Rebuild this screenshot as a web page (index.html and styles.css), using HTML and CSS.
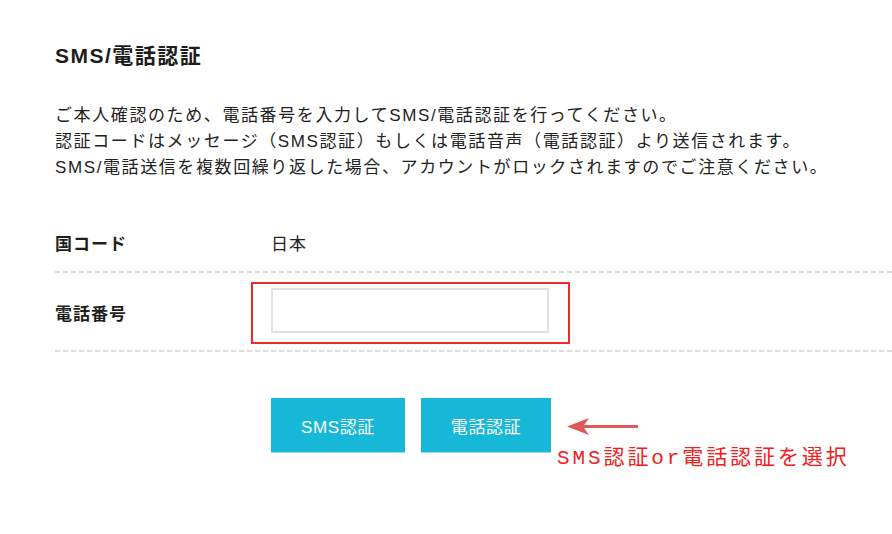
FILE: index.html
```html
<!DOCTYPE html>
<html lang="ja">
<head>
<meta charset="utf-8">
<title>SMS/電話認証</title>
<link rel="stylesheet" href="styles.css">
</head>
<body>
<div class="page">
  <h1 class="title">SMS/電話認証</h1>
  <p class="desc">ご本人確認のため、電話番号を入力してSMS/電話認証を行ってください。<br>認証コードはメッセージ（SMS認証）もしくは電話音声（電話認証）より送信されます。<br>SMS/電話送信を複数回繰り返した場合、アカウントがロックされますのでご注意ください。</p>
  <div class="form">
    <div class="row row-country">
      <div class="label">国コード</div>
      <div class="value">日本</div>
    </div>
    <div class="row row-phone">
      <div class="label">電話番号</div>
      <div class="value">
        <div class="field-wrap">
          <input class="field" type="text" aria-label="電話番号">
          <span class="highlight"></span>
        </div>
      </div>
    </div>
  </div>
  <div class="actions">
    <button class="btn" type="button">SMS認証</button>
    <button class="btn" type="button">電話認証</button>
    <div class="annotation">
      <svg class="arrow" width="74" height="20" viewBox="0 0 74 20" aria-hidden="true">
        <line x1="14" y1="9.5" x2="71" y2="9.5" stroke="#e0595a" stroke-width="3"/>
        <polygon points="0,9.5 22,1 16,9.5 22,18" fill="#e0575a"/>
      </svg>
      <span class="note">SMS認証or電話認証を選択</span>
    </div>
  </div>
</div>
</body>
</html>
```

FILE: styles.css
```css
* { box-sizing: border-box; }

html, body {
  margin: 0;
  background: #ffffff;
}

body {
  color: #222222;
  font-family: "Liberation Sans", "Noto Sans CJK JP", sans-serif;
}

.page {
  padding: 42px 0 90px 55px;
  min-height: 534px;
}

.title {
  margin: 0;
  font-size: 21px;
  line-height: 28px;
  font-weight: 700;
  letter-spacing: 1.5px;
  color: #1c1c1c;
}

.desc {
  margin: 33px 0 0;
  font-size: 17px;
  line-height: 26px;
  letter-spacing: 1.6px;
  color: #222222;
}

.form {
  margin-top: 32px;
}

.row {
  display: flex;
  align-items: center;
  background-image: linear-gradient(to right, #dcdcdc 5px, transparent 5px);
  background-size: 8px 2px;
  background-repeat: repeat-x;
  background-position: left bottom;
}

.row-country {
  height: 60px;
  padding-bottom: 2px;
}

.row-phone {
  padding: 15px 0 19px;
}

.label {
  width: 216px;
  flex: none;
  font-size: 17px;
  font-weight: 700;
  letter-spacing: 1px;
  color: #1e1e1e;
}

.row-phone .label {
  padding-top: 4px;
}

.value {
  font-size: 17px;
  letter-spacing: 1px;
  color: #222222;
}

.field-wrap {
  position: relative;
}

.field {
  display: block;
  width: 278px;
  height: 45px;
  border: 2px solid #e0e0e0;
  background: #ffffff;
  outline: none;
  margin: 0;
}

.highlight {
  position: absolute;
  left: -20px;
  top: -6px;
  width: 319px;
  height: 62px;
  border: 2px solid #ee2a2a;
  pointer-events: none;
}

.actions {
  position: relative;
  display: flex;
  gap: 16px;
  margin: 46px 0 0 216px;
}

.btn {
  height: 55px;
  padding: 0 30px;
  border: none;
  background: #17b8d7;
  box-shadow: inset 0 -1px 0 #8fd9ea;
  color: #ffffff;
  font-family: "Liberation Sans", "Noto Sans CJK JP", sans-serif;
  font-size: 17px;
  font-weight: 400;
  letter-spacing: 0.6px;
}

.annotation {
  position: absolute;
  left: 286px;
  top: 19px;
  width: 330px;
  height: 60px;
}

.arrow {
  display: block;
  margin-left: 10px;
}

.note {
  display: block;
  margin-top: 10px;
  white-space: nowrap;
  font-family: "Liberation Mono", "Noto Sans CJK JP", monospace;
  font-size: 21px;
  line-height: 24px;
  letter-spacing: 2.9px;
  color: #f02020;
}
```
